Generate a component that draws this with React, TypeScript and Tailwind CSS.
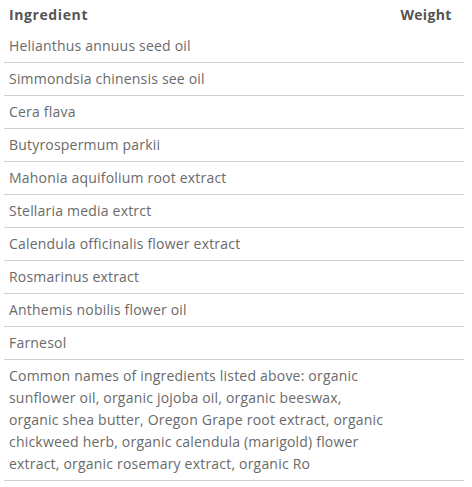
import React from 'react';

const ingredients = [
  'Helianthus annuus seed oil',
  'Simmondsia chinensis see oil',
  'Cera flava',
  'Butyrospermum parkii',
  'Mahonia aquifolium root extract',
  'Stellaria media extrct',
  'Calendula officinalis flower extract',
  'Rosmarinus extract',
  'Anthemis nobilis flower oil',
  'Farnesol',
  'Common names of ingredients listed above: organic sunflower oil, organic jojoba oil, organic beeswax, organic shea butter, Oregon Grape root extract, organic chickweed herb, organic calendula (marigold) flower extract, organic rosemary extract, organic Ro',
];

export default function App() {
  return (
    <div className="min-h-[487px] w-[472px] bg-white font-['Open_Sans',sans-serif]">
      <table className="ml-[4px] w-[460px] table-fixed border-collapse">
        <colgroup>
          <col className="w-[388px]" />
          <col className="w-[72px]" />
        </colgroup>
        <thead>
          <tr>
            <th className="pt-[4px] pb-[4px] pl-[5px] text-left text-[14px] font-bold leading-[22px] tracking-[0.6px] text-[#555]">
              Ingredient
            </th>
            <th className="pt-[4px] pb-[4px] pr-[4px] text-center text-[14px] font-bold leading-[22px] tracking-[0.3px] text-[#555]">
              Weight
            </th>
          </tr>
        </thead>
        <tbody>
          {ingredients.map((name) => (
            <tr key={name} className="border-b border-[#d0d0d0]">
              <td className="py-[5px] pl-[5px] pr-[3px] text-[14px] leading-[22px] tracking-[0.2px] text-[#6a6a6a]">
                {name}
              </td>
              <td />
            </tr>
          ))}
        </tbody>
      </table>
    </div>
  );
}
